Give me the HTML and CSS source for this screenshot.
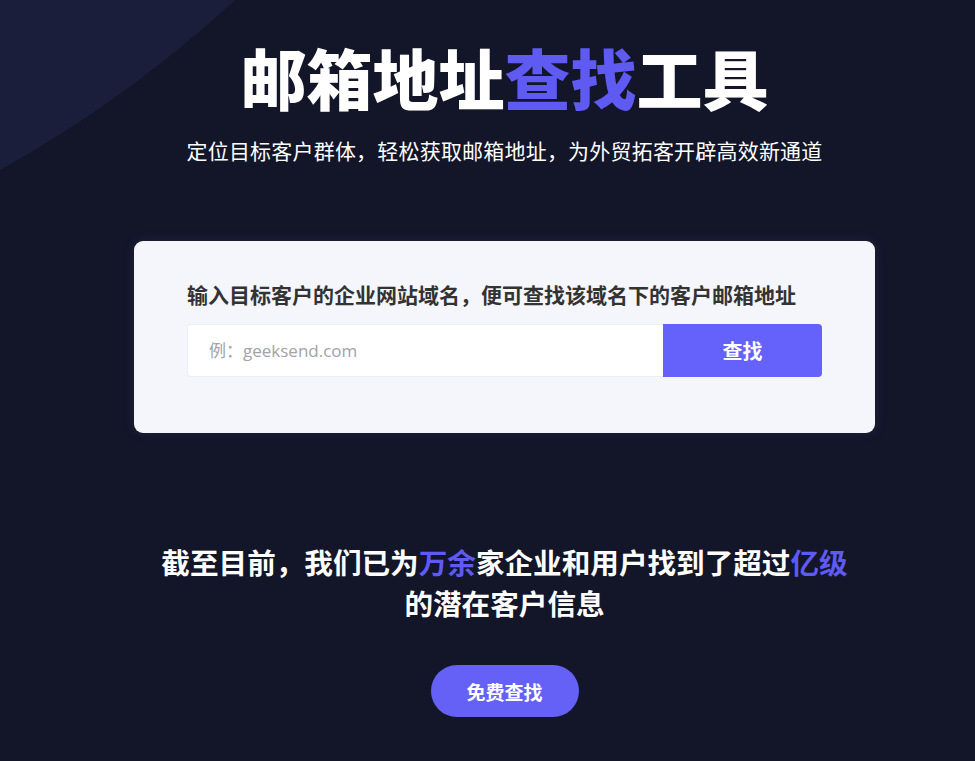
FILE: index.html
```html
<!DOCTYPE html>
<html lang="zh-CN">
<head>
<meta charset="utf-8">
<title>邮箱地址查找工具</title>
<link rel="stylesheet" href="styles.css">
</head>
<body>
<div class="page">
  <div class="bg-shape"></div>
  <header class="hero">
    <h1 class="title">邮箱地址<span class="accent">查找</span>工具</h1>
    <p class="subtitle">定位目标客户群体，轻松获取邮箱地址，为外贸拓客开辟高效新通道</p>
  </header>
  <section class="card">
    <p class="card-label">输入目标客户的企业网站域名，便可查找该域名下的客户邮箱地址</p>
    <form class="search">
      <input class="search-input" type="text" placeholder="例：geeksend.com">
      <button class="search-btn" type="button">查找</button>
    </form>
  </section>
  <section class="stats">
    <p class="stats-text">截至目前，我们已为<span class="accent">万余</span>家企业和用户找到了超过<span class="accent">亿级</span><br>的潜在客户信息</p>
    <button class="free-btn" type="button">免费查找</button>
  </section>
</div>
</body>
</html>
```
FILE: styles.css
```css
html, body {
  margin: 0;
  padding: 0;
}
body {
  background: #131529;
  font-family: "Noto Sans CJK SC", "Noto Sans", sans-serif;
  color: #fff;
}
.page {
  position: relative;
  width: 975px;
  height: 761px;
  box-sizing: border-box;
  padding-left: 34px;
  overflow: hidden;
  display: flex;
  flex-direction: column;
  align-items: center;
}
.bg-shape {
  position: absolute;
  left: -1781px;
  top: -2080px;
  width: 2400px;
  height: 2400px;
  border-radius: 50%;
  background: #1b1e3a;
  z-index: 0;
}
.hero, .card, .stats {
  position: relative;
  z-index: 1;
}
.hero {
  display: flex;
  flex-direction: column;
  align-items: center;
  padding-top: 38px;
}
.title {
  margin: 0;
  font-size: 66px;
  line-height: 76px;
  font-weight: 900;
  letter-spacing: 0;
  color: #fff;
}
.accent {
  color: #5f5af2;
}
.subtitle {
  margin: 21px 0 0;
  font-size: 21px;
  line-height: 30px;
  letter-spacing: 0.2px;
  color: #fff;
  font-weight: 400;
}
.card {
  margin-top: 76px;
  width: 741px;
  height: 192px;
  box-sizing: border-box;
  background: #f5f6fb;
  border-radius: 9px;
  padding: 38px 53px 0;
  box-shadow: 0 0 12px rgba(120, 120, 180, 0.15);
}
.card-label {
  margin: 0;
  font-size: 21px;
  line-height: 30px;
  font-weight: 700;
  color: #333;
}
.search {
  margin: 15px 0 0;
  display: flex;
  width: 635px;
  height: 53px;
}
.search-input {
  flex: 1;
  height: 53px;
  box-sizing: border-box;
  border: 1px solid #eceef4;
  border-right: none;
  border-radius: 4px 0 0 4px;
  background: #fff;
  padding: 0 21px;
  font-family: "Open Sans", "Noto Sans CJK SC", sans-serif;
  font-size: 17px;
  color: #333;
  outline: none;
}
.search-input::placeholder {
  color: #a2a2a8;
}
.search-btn {
  width: 159px;
  height: 53px;
  border: none;
  border-radius: 0 4px 4px 0;
  background: #6561fb;
  color: #fff;
  font-family: "Noto Sans CJK SC", sans-serif;
  font-size: 20px;
  font-weight: 700;
  cursor: pointer;
}
.stats {
  display: flex;
  flex-direction: column;
  align-items: center;
  margin-top: 108px;
}
.stats-text {
  margin: 0;
  text-align: center;
  font-size: 28.6px;
  line-height: 41px;
  font-weight: 700;
  color: #fff;
}
.free-btn {
  margin-top: 42px;
  width: 148px;
  height: 52px;
  border: none;
  border-radius: 26px;
  background: #6561f6;
  color: #fff;
  font-family: "Noto Sans CJK SC", sans-serif;
  font-size: 19px;
  font-weight: 700;
  cursor: pointer;
}
```
